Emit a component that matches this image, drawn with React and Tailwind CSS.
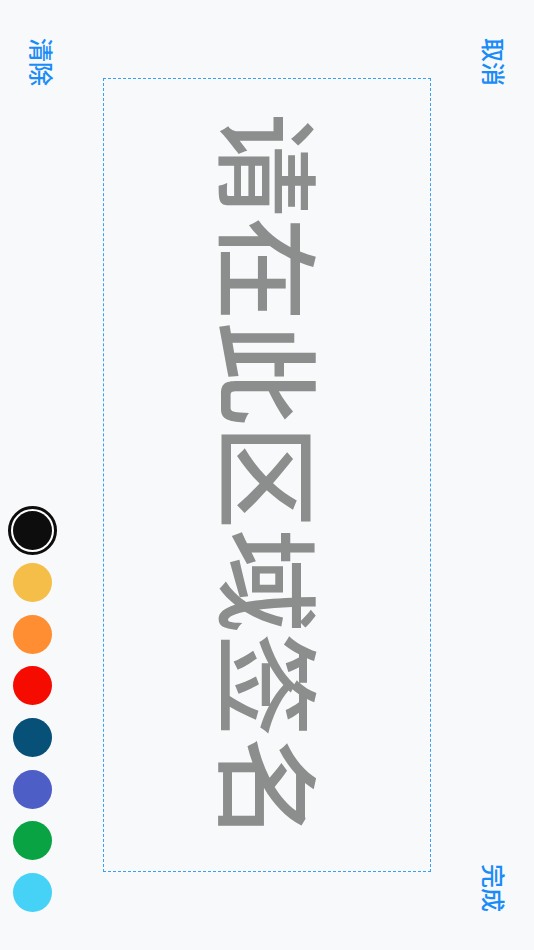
import React, { useState } from "react";

const colors = [
  "#0d0d0d",
  "#f4be48",
  "#ff8e32",
  "#f50b00",
  "#075078",
  "#4d5ec6",
  "#0aa344",
  "#46d1f7",
];

const vert = "[writing-mode:vertical-rl] [text-orientation:sideways]";

export default function App() {
  const [active, setActive] = useState(0);

  return (
    <div
      className="h-screen w-full bg-[#f7f9fb] flex select-none"
      style={{ fontFamily: '"Noto Sans CJK SC", "Noto Sans", sans-serif' }}
    >
      {/* left: clear + colors */}
      <div className="w-[64px] flex flex-col items-center justify-between pt-[38px] pb-[38px]">
        <button className={`${vert} text-[24px] leading-none font-medium text-[#1a8cf7] ml-[20px]`}>清除</button>
        <div className="flex flex-col items-center gap-[12.7px]">
          {colors.map((c, i) => (
            <button
              key={c}
              onClick={() => setActive(i)}
              className={
                i === active
                  ? "w-[49px] h-[49px] rounded-full border-[3px] border-[#0d0d0d] p-[2px] bg-white -mt-[5px] -mb-[5px]"
                  : "w-[39px] h-[39px] rounded-full"
              }
              style={i === active ? undefined : { background: c }}
            >
              {i === active && (
                <span className="block w-full h-full rounded-full" style={{ background: c }} />
              )}
            </button>
          ))}
        </div>
      </div>

      {/* signing area */}
      <div className="ml-[39px] my-[78px] w-[328px] border-[1.5px] border-dashed border-[#3aa0f5] flex items-center justify-center">
        <span className={`${vert} text-[104px] leading-none font-medium text-[#8c8e8d] ml-[10px] mt-[5px]`}>请在此区域签名</span>
      </div>

      {/* right: cancel / done */}
      <div className="flex-1 flex flex-col items-center justify-between pt-[38px] pb-[38px] pl-[23px]">
        <button className={`${vert} text-[24px] leading-none font-medium text-[#1a8cf7]`}>取消</button>
        <button className={`${vert} text-[24px] leading-none font-medium text-[#1a8cf7]`}>完成</button>
      </div>
    </div>
  );
}
